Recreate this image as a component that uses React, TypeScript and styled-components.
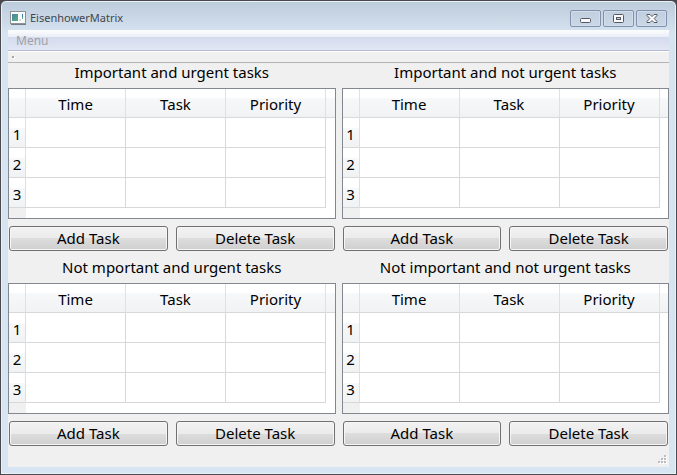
import React from "react";
import styled, { createGlobalStyle } from "styled-components";

const GlobalStyle = createGlobalStyle`
  * { box-sizing: border-box; }
  body {
    margin: 0;
    background: #4b484b;
    font-family: "Noto Sans", "Open Sans", sans-serif;
    color: #000;
  }
`;

const Window = styled.div`
  display: flex;
  flex-direction: column;
  min-height: 100vh;
  padding: 1px 7px 7px;
  border: 1px solid #4b494d;
  border-radius: 6px 6px 0 0;
  background: linear-gradient(#bccbda, #d6e3f1 32px, #d7e4f2);
  box-shadow: inset 0 0 0 1px #e9f2fa;
`;

const TitleBar = styled.header`
  display: flex;
  align-items: center;
  height: 28px;
  padding: 4px 2px 0;
  gap: 4px;
`;

const Title = styled.h1`
  flex: 1;
  margin: 0;
  font-size: 11px;
  line-height: 16px;
  font-weight: 400;
  color: #41464d;
`;

const WindowControls = styled.div`
  display: flex;
  gap: 2px;
`;

const WindowButton = styled.button`
  display: flex;
  align-items: center;
  justify-content: center;
  width: 31px;
  height: 17px;
  padding: 0;
  border: 1px solid #8090ad;
  border-radius: 2px;
  background: linear-gradient(#c0cedd, #cbd9e7);
  box-shadow: inset 0 0 0 1px #d0ddea;
`;

const Client = styled.main`
  display: flex;
  flex: 1;
  flex-direction: column;
  background: #f0f0f0;
`;

const MenuBar = styled.nav`
  display: flex;
  height: 21px;
  border-bottom: 1px solid #b3b9d0;
  background: linear-gradient(#fdfdfe, #e9edf6 7px, #d4daed 7px, #e2e7f5);
`;

const MenuButton = styled.button`
  padding: 1px 8px 0;
  border: 0;
  background: none;
  font: inherit;
  font-size: 12px;
  line-height: 18px;
  color: #a0a1a8;
`;

const ToolBar = styled.div`
  height: 12px;
  padding: 4px;
  border-top: 1px solid #fff;
  border-bottom: 1px solid #b4b4b4;
`;

const Handle = styled.div`
  width: 2px;
  height: 2px;
  background: #a8a8a8;
  box-shadow: 1px 1px 0 #fff;
`;

const Matrix = styled.div`
  display: grid;
  grid-template-columns: 1fr 1fr;
  gap: 7px 6px;
`;

const Panel = styled.section`
  display: flex;
  flex-direction: column;
  min-width: 0;
`;

const PanelTitle = styled.h2`
  margin: 0 0 7px;
  font-size: 15px;
  line-height: 18px;
  font-weight: 400;
  text-align: center;
  white-space: nowrap;
`;

const TableFrame = styled.div`
  overflow: hidden;
  border: 1px solid #828790;
  background: #fff;
`;

const TaskTable = styled.table`
  width: 100%;
  border-collapse: separate;
  border-spacing: 0;
  table-layout: fixed;
  font-size: 15px;
  line-height: 20px;
`;

const HeaderColumn = styled.col`
  width: 17px;
`;

const DataColumn = styled.col`
  width: 100px;
`;

const ColumnHeader = styled.th`
  height: 29px;
  padding: 2px 0 0;
  border-right: 1px solid #e0e1e3;
  border-bottom: 1px solid #d7d8da;
  background: linear-gradient(#fff 9px, #f7f8fa 9px, #f1f2f4);
  font-weight: 400;

  &:last-child {
    border-right: 0;
  }
`;

const RowHeader = styled.th`
  height: 30px;
  padding: 2px 0 0;
  border-right: 1px solid #dedfe1;
  border-bottom: 1px solid #d7d8da;
  background: linear-gradient(#fff 10px, #f7f8fa 10px, #f1f2f4);
  font-weight: 400;
`;

const Cell = styled.td`
  height: 30px;
  padding: 0;
  border-right: 1px solid #d8d8d8;
  border-bottom: 1px solid #d8d8d8;
`;

const Spacer = styled.td`
  padding: 0;
`;

const HeaderTail = styled.td`
  height: 10px;
  padding: 0;
  background: #f0f0f0;
`;

const Actions = styled.div`
  display: grid;
  grid-template-columns: 1fr 1fr;
  gap: 8px;
  padding: 7px 1px 0;
`;

const ActionButton = styled.button`
  height: 25px;
  padding: 0 0 2px;
  border: 1px solid #707070;
  border-radius: 3px;
  background: linear-gradient(#f2f2f2, #ebebeb 50%, #dddddd 50%, #cfcfcf);
  box-shadow: inset 0 0 0 1px #f6f6f6;
  font: inherit;
  font-size: 15px;
  line-height: 20px;
  color: #000;
`;

const StatusBar = styled.footer`
  display: flex;
  flex: 1;
  align-items: flex-end;
  justify-content: flex-end;
  padding: 2px;
`;

const AppIcon = () => (
  <svg width="16" height="14" viewBox="0 0 16 14" aria-hidden="true">
    <defs>
      <linearGradient id="screen" x1="0" y1="0" x2="1" y2="1">
        <stop offset="0" stopColor="#4a7fa8" />
        <stop offset="1" stopColor="#55b179" />
      </linearGradient>
    </defs>
    <rect x=".5" y=".5" width="15" height="12" fill="#fafbfb" stroke="#8d9297" />
    <path d="M1 13.5h15" stroke="#777c82" />
    <rect x="2" y="3" width="6" height="7" fill="url(#screen)" />
    <rect x="9" y="8" width="2" height="2" fill="#d3dbe0" />
    <rect x="12" y="3" width="1" height="3" fill="#4179ae" />
    <rect x="12" y="6" width="1" height="2" fill="#62ac83" />
  </svg>
);

const MinimizeIcon = () => (
  <svg width="12" height="12" viewBox="0 0 12 12" aria-hidden="true">
    <rect x=".5" y="6.5" width="10" height="4" rx="1" fill="#fafafa" stroke="#535666" />
  </svg>
);

const MaximizeIcon = () => (
  <svg width="12" height="12" viewBox="0 0 12 12" aria-hidden="true">
    <rect x=".5" y="2.5" width="10" height="8" rx="1" fill="#fafafa" stroke="#535666" />
    <rect x="3.5" y="5.5" width="4" height="2" fill="#c2d0df" stroke="#535666" />
  </svg>
);

const CloseIcon = () => (
  <svg width="12" height="12" viewBox="0 0 12 12" aria-hidden="true">
    <path
      d="M1 2.5h3l2 2 2-2h3v1L8.2 6.5 11 9.5v1H8l-2-2-2 2H1v-1l2.8-3L1 3.5z"
      fill="#fafafa"
      stroke="#535666"
      strokeLinejoin="round"
    />
  </svg>
);

const SizeGrip = () => (
  <svg width="10" height="10" viewBox="0 0 10 10" aria-hidden="true">
    {[[7, 0], [7, 3], [4, 3], [7, 6], [4, 6], [1, 6]].map(([x, y]) => (
      <g key={`${x}-${y}`}>
        <rect x={x + 1} y={y + 1} width="2" height="2" fill="#fff" />
        <rect x={x} y={y} width="2" height="2" fill="#bdbdbd" />
      </g>
    ))}
  </svg>
);

const quadrants = [
  "Important and urgent tasks",
  "Important and not urgent tasks",
  "Not mportant and urgent tasks",
  "Not important and not urgent tasks",
];
const columns = ["Time", "Task", "Priority"];
const rows = [1, 2, 3];

const TaskPanel = ({ title }: { title: string }) => (
  <Panel>
    <PanelTitle>{title}</PanelTitle>
    <TableFrame>
      <TaskTable aria-label={title}>
        <colgroup>
          <HeaderColumn />
          {columns.map((name) => <DataColumn key={name} />)}
          <col />
        </colgroup>
        <thead>
          <tr>
            <ColumnHeader />
            {columns.map((name) => (
              <ColumnHeader key={name} scope="col">{name}</ColumnHeader>
            ))}
            <ColumnHeader />
          </tr>
        </thead>
        <tbody>
          {rows.map((row) => (
            <tr key={row}>
              <RowHeader scope="row">{row}</RowHeader>
              {columns.map((name) => <Cell key={name} />)}
              <Spacer />
            </tr>
          ))}
          <tr>
            <HeaderTail />
            <Spacer colSpan={4} />
          </tr>
        </tbody>
      </TaskTable>
    </TableFrame>
    <Actions>
      <ActionButton type="button">Add Task</ActionButton>
      <ActionButton type="button">Delete Task</ActionButton>
    </Actions>
  </Panel>
);

export default function App() {
  return (
    <>
      <GlobalStyle />
      <Window>
        <TitleBar>
          <AppIcon />
          <Title>EisenhowerMatrix</Title>
          <WindowControls>
            <WindowButton type="button" aria-label="Minimize"><MinimizeIcon /></WindowButton>
            <WindowButton type="button" aria-label="Maximize"><MaximizeIcon /></WindowButton>
            <WindowButton type="button" aria-label="Close"><CloseIcon /></WindowButton>
          </WindowControls>
        </TitleBar>
        <Client>
          <MenuBar>
            <MenuButton type="button">Menu</MenuButton>
          </MenuBar>
          <ToolBar><Handle /></ToolBar>
          <Matrix>
            {quadrants.map((title) => <TaskPanel key={title} title={title} />)}
          </Matrix>
          <StatusBar><SizeGrip /></StatusBar>
        </Client>
      </Window>
    </>
  );
}
